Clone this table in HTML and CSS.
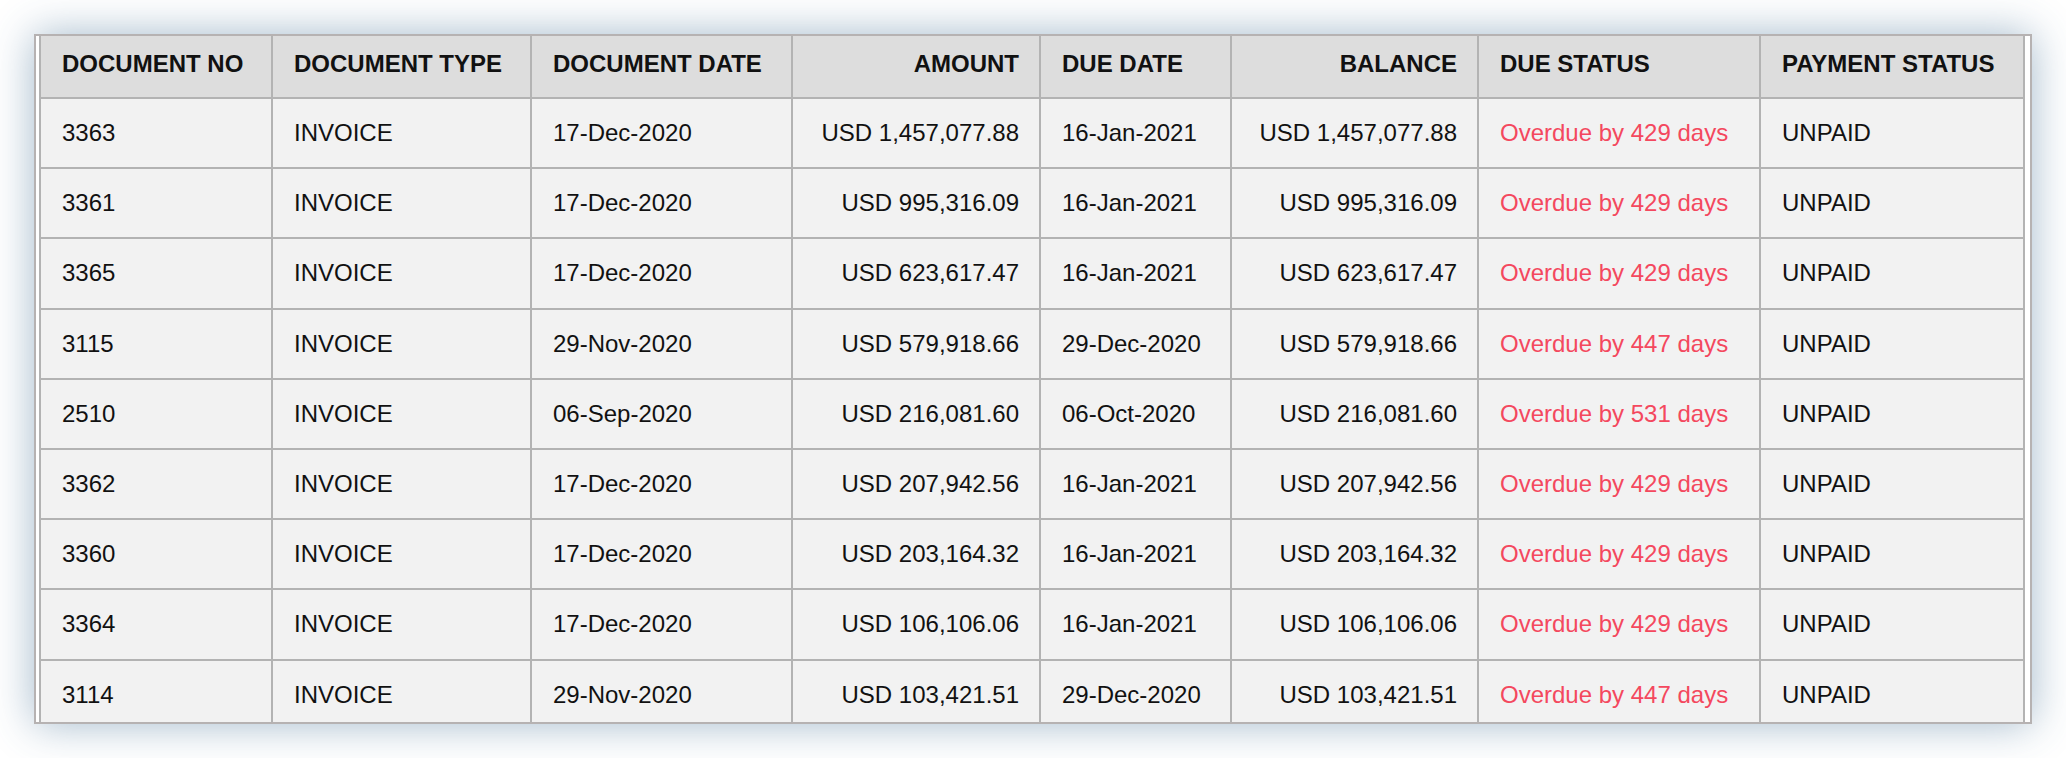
FILE: index.html
```html
<!DOCTYPE html>
<html lang="en">
<head>
<meta charset="utf-8">
<title>Documents</title>
<link rel="stylesheet" href="styles.css">
</head>
<body>
<div class="frame">
  <table class="docs">
    <thead>
      <tr>
        <th class="c1">DOCUMENT NO</th>
        <th class="c2">DOCUMENT TYPE</th>
        <th class="c3">DOCUMENT DATE</th>
        <th class="c4 num">AMOUNT</th>
        <th class="c5">DUE DATE</th>
        <th class="c6 num">BALANCE</th>
        <th class="c7">DUE STATUS</th>
        <th class="c8">PAYMENT STATUS</th>
      </tr>
    </thead>
    <tbody>
      <tr><td>3363</td><td>INVOICE</td><td>17-Dec-2020</td><td class="num">USD 1,457,077.88</td><td>16-Jan-2021</td><td class="num">USD 1,457,077.88</td><td class="due">Overdue by 429 days</td><td>UNPAID</td></tr>
      <tr><td>3361</td><td>INVOICE</td><td>17-Dec-2020</td><td class="num">USD 995,316.09</td><td>16-Jan-2021</td><td class="num">USD 995,316.09</td><td class="due">Overdue by 429 days</td><td>UNPAID</td></tr>
      <tr><td>3365</td><td>INVOICE</td><td>17-Dec-2020</td><td class="num">USD 623,617.47</td><td>16-Jan-2021</td><td class="num">USD 623,617.47</td><td class="due">Overdue by 429 days</td><td>UNPAID</td></tr>
      <tr><td>3115</td><td>INVOICE</td><td>29-Nov-2020</td><td class="num">USD 579,918.66</td><td>29-Dec-2020</td><td class="num">USD 579,918.66</td><td class="due">Overdue by 447 days</td><td>UNPAID</td></tr>
      <tr><td>2510</td><td>INVOICE</td><td>06-Sep-2020</td><td class="num">USD 216,081.60</td><td>06-Oct-2020</td><td class="num">USD 216,081.60</td><td class="due">Overdue by 531 days</td><td>UNPAID</td></tr>
      <tr><td>3362</td><td>INVOICE</td><td>17-Dec-2020</td><td class="num">USD 207,942.56</td><td>16-Jan-2021</td><td class="num">USD 207,942.56</td><td class="due">Overdue by 429 days</td><td>UNPAID</td></tr>
      <tr><td>3360</td><td>INVOICE</td><td>17-Dec-2020</td><td class="num">USD 203,164.32</td><td>16-Jan-2021</td><td class="num">USD 203,164.32</td><td class="due">Overdue by 429 days</td><td>UNPAID</td></tr>
      <tr><td>3364</td><td>INVOICE</td><td>17-Dec-2020</td><td class="num">USD 106,106.06</td><td>16-Jan-2021</td><td class="num">USD 106,106.06</td><td class="due">Overdue by 429 days</td><td>UNPAID</td></tr>
      <tr><td>3114</td><td>INVOICE</td><td>29-Nov-2020</td><td class="num">USD 103,421.51</td><td>29-Dec-2020</td><td class="num">USD 103,421.51</td><td class="due">Overdue by 447 days</td><td>UNPAID</td></tr>
    </tbody>
  </table>
</div>
</body>
</html>
```
FILE: styles.css
```css
html, body {
  margin: 0;
  padding: 0;
  background: #ffffff;
}

body {
  padding: 34px;
  font-family: "Liberation Sans", Arial, sans-serif;
  font-size: 24px;
  color: #111111;
}

.frame {
  box-sizing: content-box;
  width: 1986px;
  height: 686px;
  padding: 0 5px 0 3px;
  border: 2px solid #b6b2b2;
  background: #ffffff;
  overflow: hidden;
  box-shadow: 0 0 40px rgba(50, 100, 140, 0.45);
}

.docs {
  box-sizing: border-box;
  width: 1986px;
  table-layout: fixed;
  border-collapse: separate;
  border-spacing: 0;
  border-left: 2px solid #b3b3b3;
}

.docs th,
.docs td {
  box-sizing: border-box;
  border-right: 2px solid #b3b3b3;
  border-bottom: 2px solid #b3b3b3;
  padding: 20.1px 20px 20.1px 21px;
  line-height: 28px;
  text-align: left;
  white-space: nowrap;
  overflow: hidden;
}

.docs th {
  background: #dddddd;
  font-weight: bold;
  padding-top: 14px;
  padding-bottom: 19px;
}

.docs td {
  background: #f2f2f2;
  font-weight: normal;
}

.docs .num {
  text-align: right;
}

.docs .due {
  color: #f4485e;
}

.c1 { width: 232px; }
.c2 { width: 259px; }
.c3 { width: 261px; }
.c4 { width: 248px; }
.c5 { width: 191px; }
.c6 { width: 247px; }
.c7 { width: 282px; }
.c8 { width: 264px; }
```
